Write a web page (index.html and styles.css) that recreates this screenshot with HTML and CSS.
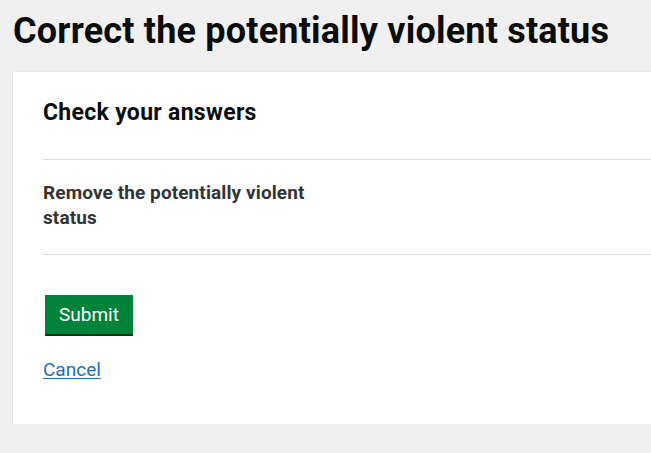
FILE: index.html
```html
<!DOCTYPE html>
<html lang="en">
<head>
<meta charset="utf-8">
<title>Correct the potentially violent status</title>
<link rel="stylesheet" href="styles.css">
</head>
<body>
<main class="page">
  <h1 class="page-title">Correct the potentially violent status</h1>
  <section class="card">
    <h2 class="card-title">Check your answers</h2>
    <dl class="summary">
      <div class="summary-row">
        <dt class="summary-key">Remove the potentially violent status</dt>
        <dd class="summary-value"></dd>
      </div>
    </dl>
    <button class="btn" type="button">Submit</button>
    <a class="link" href="#">Cancel</a>
  </section>
</main>
</body>
</html>
```
FILE: styles.css
```css
html, body {
  margin: 0;
  padding: 0;
  background: #f0f0f0;
  overflow: hidden;
}
body {
  font-family: Roboto, "Liberation Sans", Arial, sans-serif;
  color: #0b0c0c;
}
.page {
  padding: 11px 0 0 13px;
}
.page-title {
  margin: 0 0 21px;
  font-size: 36px;
  line-height: 40px;
  font-weight: 700;
  letter-spacing: 0.2px;
  white-space: nowrap;
}
.card {
  background: #fff;
  margin-right: -30px;
  padding: 26px 0 42px 30px;
  box-shadow: 0 2px 1px rgba(0, 0, 0, 0.18), 0 0 1px rgba(0, 0, 0, 0.16);
}
.card-title {
  margin: 0 0 31px;
  font-size: 23px;
  line-height: 30px;
  font-weight: 700;
  letter-spacing: 0.3px;
}
.summary {
  margin: 0 0 40px;
  padding: 0;
}
.summary-row {
  display: flex;
  border-top: 1px solid #dadada;
  border-bottom: 1px solid #dadada;
}
.summary-key {
  width: 285px;
  margin: 0;
  padding: 20px 0 24px;
  font-size: 19px;
  line-height: 25px;
  font-weight: 700;
  letter-spacing: 0.1px;
  color: #333;
}
.summary-value {
  margin: 0;
  flex: 1;
}
.btn {
  display: block;
  margin: 0 0 23px 2px;
  padding: 8px 12px 8px;
  border: 2px solid transparent;
  background: #00823b;
  box-shadow: 0 2px 0 #003618;
  color: #fff;
  font-family: inherit;
  font-size: 19px;
  line-height: 19px;
  font-weight: 400;
  cursor: pointer;
}
.link {
  display: inline-block;
  font-size: 19px;
  line-height: 25px;
  color: #1d70b8;
  text-decoration: underline;
  text-underline-offset: 2px;
}
```
